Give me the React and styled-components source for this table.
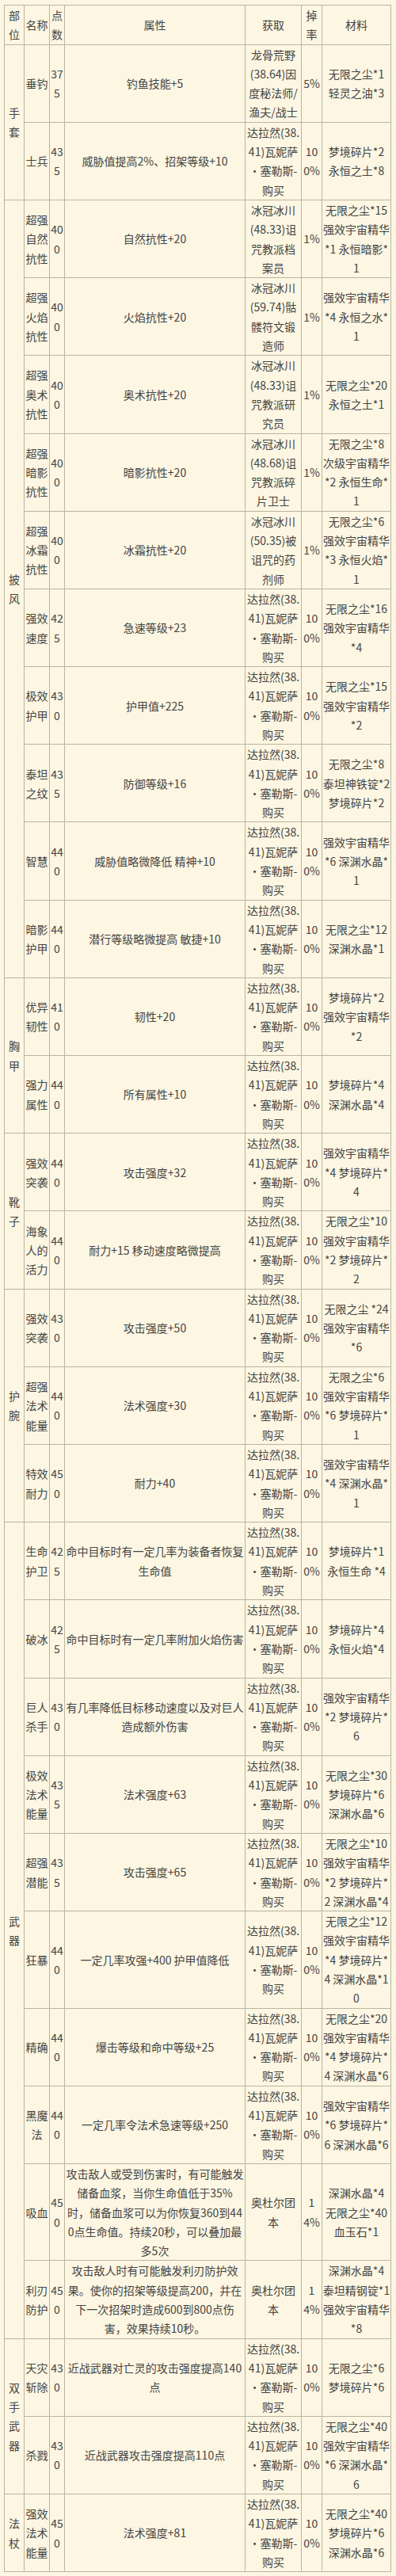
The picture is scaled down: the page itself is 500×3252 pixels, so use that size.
import React from 'react';
import styled, { createGlobalStyle, css } from 'styled-components';

const GlobalStyle = createGlobalStyle`
    html, body {
        margin: 0;
        padding: 0;
        background: #fcf6e2;
    }
    body {
        font-family: "Noto Sans CJK SC", "Noto Sans", sans-serif;
        color: #444;
    }
`;

const Page = styled.div`
    padding: 6px 7px 5px 5px;
`;

const Table = styled.table`
    width: 488px;
    table-layout: fixed;
    border-collapse: collapse;
    font-size: 14px;
    line-height: 24.3px;
    background: #fcf6e2;
`;

const cellBase = css`
    border: 1px solid #bab5a2;
    padding: 0;
    text-align: center;
    vertical-align: middle;
    white-space: pre-line; // line breaks come from the data
    word-break: break-all;
`;

const HeadCell = styled.th`
    ${cellBase}
    font-weight: normal;
`;

const Cell = styled.td`
    ${cellBase}
`;

const COLS = [25, 32, 19, 228, 71, 26, 87];

const DALARAN = '达拉然(38.\n41)瓦妮萨\n·塞勒斯-\n购买';
const FULL = '10\n0%';
const ULDUAR = '奥杜尔团\n本';

const groups = [
    {
        part: '手\n套',
        items: [
            ['垂钓', '37\n5', '钓鱼技能+5', '龙骨荒野\n(38.64)因\n度秘法师/\n渔夫/战士', '5%', '无限之尘*1\n轻灵之油*3'],
            ['士兵', '43\n5', '威胁值提高2%、招架等级+10', DALARAN, FULL, '梦境碎片*2\n永恒之土*8'],
        ],
    },
    {
        part: '披\n风',
        items: [
            ['超强\n自然\n抗性', '40\n0', '自然抗性+20', '冰冠冰川\n(48.33)诅\n咒教派档\n案员', '1%', '无限之尘*15\n强效宇宙精华\n*1 永恒暗影*\n1'],
            ['超强\n火焰\n抗性', '40\n0', '火焰抗性+20', '冰冠冰川\n(59.74)骷\n髅符文锻\n造师', '1%', '强效宇宙精华\n*4 永恒之水*\n1'],
            ['超强\n奥术\n抗性', '40\n0', '奥术抗性+20', '冰冠冰川\n(48.33)诅\n咒教派研\n究员', '1%', '无限之尘*20\n永恒之土*1'],
            ['超强\n暗影\n抗性', '40\n0', '暗影抗性+20', '冰冠冰川\n(48.68)诅\n咒教派碎\n片卫士', '1%', '无限之尘*8\n次级宇宙精华\n*2 永恒生命*\n1'],
            ['超强\n冰霜\n抗性', '40\n0', '冰霜抗性+20', '冰冠冰川\n(50.35)被\n诅咒的药\n剂师', '1%', '无限之尘*6\n强效宇宙精华\n*3 永恒火焰*\n1'],
            ['强效\n速度', '42\n5', '急速等级+23', DALARAN, FULL, '无限之尘*16\n强效宇宙精华\n*4'],
            ['极效\n护甲', '43\n0', '护甲值+225', DALARAN, FULL, '无限之尘*15\n强效宇宙精华\n*2'],
            ['泰坦\n之纹', '43\n5', '防御等级+16', DALARAN, FULL, '无限之尘*8\n泰坦神铁锭*2\n梦境碎片*2'],
            ['智慧', '44\n0', '威胁值略微降低 精神+10', DALARAN, FULL, '强效宇宙精华\n*6 深渊水晶*\n1'],
            ['暗影\n护甲', '44\n0', '潜行等级略微提高 敏捷+10', DALARAN, FULL, '无限之尘*12\n深渊水晶*1'],
        ],
    },
    {
        part: '胸\n甲',
        items: [
            ['优异\n韧性', '41\n0', '韧性+20', DALARAN, FULL, '梦境碎片*2\n强效宇宙精华\n*2'],
            ['强力\n属性', '44\n0', '所有属性+10', DALARAN, FULL, '梦境碎片*4\n深渊水晶*4'],
        ],
    },
    {
        part: '靴\n子',
        items: [
            ['强效\n突袭', '44\n0', '攻击强度+32', DALARAN, FULL, '强效宇宙精华\n*4 梦境碎片*\n4'],
            ['海象\n人的\n活力', '44\n0', '耐力+15 移动速度略微提高', DALARAN, FULL, '无限之尘*10\n强效宇宙精华\n*2 梦境碎片*\n2'],
        ],
    },
    {
        part: '护\n腕',
        items: [
            ['强效\n突袭', '43\n0', '攻击强度+50', DALARAN, FULL, '无限之尘 *24\n强效宇宙精华\n*6'],
            ['超强\n法术\n能量', '44\n0', '法术强度+30', DALARAN, FULL, '无限之尘*6\n强效宇宙精华\n*6 梦境碎片*\n1'],
            ['特效\n耐力', '45\n0', '耐力+40', DALARAN, FULL, '强效宇宙精华\n*4 深渊水晶*\n1'],
        ],
    },
    {
        part: '武\n器',
        items: [
            ['生命\n护卫', '42\n5', '命中目标时有一定几率为装备者恢复\n生命值', DALARAN, FULL, '梦境碎片*1\n永恒生命 *4'],
            ['破冰', '42\n5', '命中目标时有一定几率附加火焰伤害', DALARAN, FULL, '梦境碎片*4\n永恒火焰*4'],
            ['巨人\n杀手', '43\n0', '有几率降低目标移动速度以及对巨人\n造成额外伤害', DALARAN, FULL, '强效宇宙精华\n*2 梦境碎片*\n6'],
            ['极效\n法术\n能量', '43\n5', '法术强度+63', DALARAN, FULL, '无限之尘*30\n梦境碎片*6\n深渊水晶*6'],
            ['超强\n潜能', '43\n5', '攻击强度+65', DALARAN, FULL, '无限之尘*10\n强效宇宙精华\n*2 梦境碎片*\n2 深渊水晶*4'],
            ['狂暴', '44\n0', '一定几率攻强+400 护甲值降低', DALARAN, FULL, '无限之尘*12\n强效宇宙精华\n*4 梦境碎片*\n4 深渊水晶*1\n0'],
            ['精确', '44\n0', '爆击等级和命中等级+25', DALARAN, FULL, '无限之尘*20\n强效宇宙精华\n*4 梦境碎片*\n4 深渊水晶*6'],
            ['黑魔\n法', '44\n0', '一定几率令法术急速等级+250', DALARAN, FULL, '强效宇宙精华\n*6 梦境碎片*\n6 深渊水晶*6'],
            ['吸血', '45\n0', '攻击敌人或受到伤害时，有可能触发\n储备血浆，当你生命值低于35%\n时，储备血浆可以为你恢复360到44\n0点生命值。持续20秒，可以叠加最\n多5次', ULDUAR, '1\n4%', '深渊水晶*4\n无限之尘*40\n血玉石*1'],
            ['利刃\n防护', '45\n0', '攻击敌人时有可能触发利刃防护效\n果。使你的招架等级提高200，并在\n下一次招架时造成600到800点伤\n害，效果持续10秒。', ULDUAR, '1\n4%', '深渊水晶*4\n泰坦精钢锭*1\n强效宇宙精华\n*8'],
        ],
    },
    {
        part: '双\n手\n武\n器',
        items: [
            ['天灾\n斩除', '43\n0', '近战武器对亡灵的攻击强度提高140\n点', DALARAN, FULL, '无限之尘*6\n梦境碎片*6'],
            ['杀戮', '43\n0', '近战武器攻击强度提高110点', DALARAN, FULL, '无限之尘*40\n强效宇宙精华\n*6 深渊水晶*\n6'],
        ],
    },
    {
        part: '法\n杖',
        items: [
            ['强效\n法术\n能量', '45\n0', '法术强度+81', DALARAN, FULL, '无限之尘*40\n梦境碎片*6\n深渊水晶*6'],
        ],
    },
];

const App = () => {
    return (
        <Page>
            <GlobalStyle />
            <Table>
                <colgroup>
                    {COLS.map((w, i) => (
                        <col key={i} style={{ width: w }} />
                    ))}
                </colgroup>
                <thead>
                    <tr>
                        <HeadCell>{'部\n位'}</HeadCell>
                        <HeadCell>名称</HeadCell>
                        <HeadCell>{'点\n数'}</HeadCell>
                        <HeadCell>属性</HeadCell>
                        <HeadCell>获取</HeadCell>
                        <HeadCell>{'掉\n率'}</HeadCell>
                        <HeadCell>材料</HeadCell>
                    </tr>
                </thead>
                <tbody>
                    {groups.map((g) =>
                        g.items.map((item, i) => (
                            <tr key={g.part + i}>
                                {i === 0 && <Cell rowSpan={g.items.length}>{g.part}</Cell>}
                                {item.map((text, j) => (
                                    <Cell key={j}>{text}</Cell>
                                ))}
                            </tr>
                        ))
                    )}
                </tbody>
            </Table>
        </Page>
    );
};

export default App;
